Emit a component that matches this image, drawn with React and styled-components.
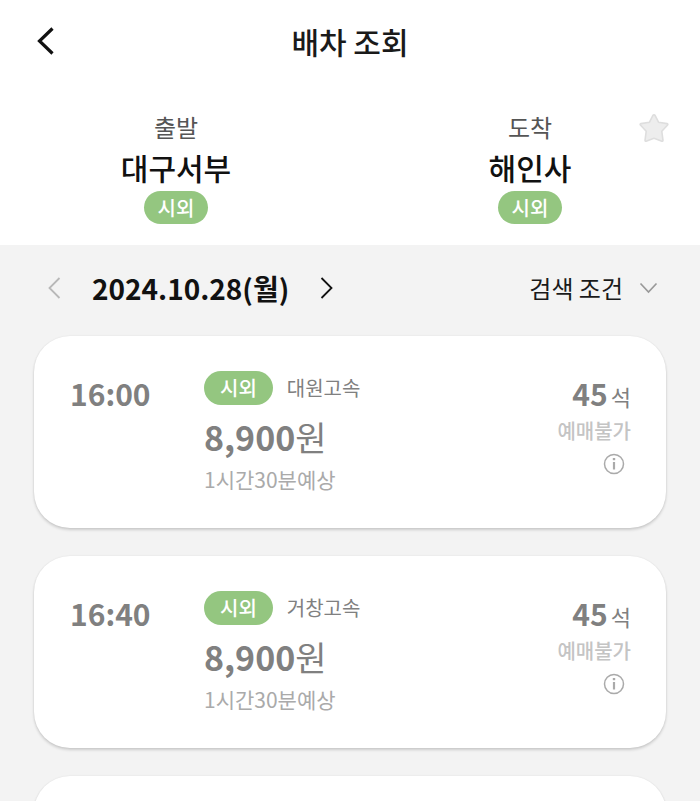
import styled, { createGlobalStyle } from 'styled-components';

const GlobalStyle = createGlobalStyle`
    * {
        box-sizing: border-box;
    }
    body {
        margin: 0;
        background: #f3f3f3;
        color: #1a1a1a;
        font-family: 'Noto Sans CJK KR', 'Noto Sans', sans-serif;
    }
    h1,
    h2,
    p,
    ul {
        margin: 0;
        padding: 0;
    }
    button {
        display: flex;
        align-items: center;
        padding: 0;
        border: 0;
        background: none;
        color: inherit;
        font: inherit;
        cursor: pointer;
    }
    svg {
        display: block;
    }
`;

const Screen = styled.div`
    display: flex;
    flex-direction: column;
    height: 100vh;
    overflow: hidden;
`;

const Header = styled.header`
    display: grid;
    grid-template-columns: 1fr auto 1fr;
    align-items: center;
    flex: none;
    height: 81px;
    padding: 0 36px;
    background: #fff;
`;

const Title = styled.h1`
    font-size: 30px;
    font-weight: 500;
    line-height: 40px;
`;

const Route = styled.section`
    display: grid;
    grid-template-columns: 1fr 1fr;
    column-gap: 14px;
    flex: none;
    padding: 30px 0 21px 6px;
    background: #fff;
`;

const Terminal = styled.div`
    display: flex;
    flex-direction: column;
    align-items: center;
    grid-row: 1;
    grid-column: ${({ $column }) => $column};
`;

const TerminalLabel = styled.p`
    color: #555;
    font-size: 24px;
    line-height: 32px;
`;

const TerminalName = styled.h2`
    color: #111;
    font-size: 30px;
    font-weight: 500;
    line-height: 48px;
`;

const Badge = styled.span`
    height: ${({ $large }) => ($large ? 34 : 33)}px;
    padding: 0 ${({ $large }) => ($large ? 16 : 14)}px;
    border-radius: 17px;
    background: #94c680;
    color: #fff;
    font-size: 20px;
    font-weight: 500;
    line-height: 33px;
`;

const FavoriteButton = styled.button`
    grid-row: 1;
    grid-column: 2;
    justify-self: end;
    align-self: start;
    margin: 1px 30px 0 0;
`;

const Toolbar = styled.div`
    display: flex;
    align-items: center;
    justify-content: space-between;
    flex: none;
    height: 85px;
    padding: 0 42px 0 48px;
`;

const DateNav = styled.div`
    display: flex;
    align-items: center;
    gap: 31px;
`;

const CurrentDate = styled.time`
    color: #111;
    font-size: 28px;
    font-weight: 700;
    line-height: 40px;
`;

const FilterButton = styled.button`
    gap: 16px;
    font-size: 24px;
    line-height: 40px;
`;

const List = styled.ul`
    flex: 1;
    display: flex;
    flex-direction: column;
    gap: 28px;
    padding: 6px 34px 28px;
    list-style: none;
    overflow-y: auto;
    scrollbar-width: none;
`;

const Card = styled.li`
    display: grid;
    grid-template-columns: 134px 1fr auto;
    flex: none;
    min-height: 192px;
    padding: 35px 35px 0 36px;
    border-radius: 36px;
    background: #fff;
    box-shadow: 0 2px 3px rgba(0, 0, 0, 0.16), 0 0 2px rgba(0, 0, 0, 0.08);
`;

const DepartTime = styled.time`
    padding-top: 2px;
    color: #808080;
    font-size: 30px;
    font-weight: 700;
    line-height: 40px;
`;

const Company = styled.div`
    display: flex;
    align-items: center;
    gap: 14px;
    color: #808080;
    font-size: 20px;
    line-height: 34px;
`;

const Price = styled.p`
    height: 58px;
    color: #808080;
    font-size: 34px;
    line-height: 64px;

    strong {
        font-weight: 700;
    }
`;

const Duration = styled.p`
    color: #aaa;
    font-size: 21px;
    line-height: 32px;
`;

const Seats = styled.div`
    display: flex;
    flex-direction: column;
    align-items: flex-end;
    padding-top: 2px;
`;

const SeatCount = styled.p`
    display: flex;
    align-items: baseline;
    gap: 3px;
    height: 40px;
    color: #808080;
    font-size: 22px;
    line-height: 40px;

    strong {
        font-size: 30px;
        font-weight: 700;
    }
`;

const Status = styled.p`
    color: #c4c4c4;
    font-size: 20px;
    font-weight: 500;
    line-height: 36px;
`;

const InfoButton = styled.button`
    margin: 4px 6px 0 0;
`;

const buses = [
    { time: '16:00', company: '대원고속' },
    { time: '16:40', company: '거창고속' },
];

function BackIcon() {
    return (
        <svg width="20" height="30" viewBox="0 0 20 30" fill="none" stroke="#111" strokeWidth="3.2">
            <path d="M16.5 2.5 3.5 15l13 12.5" />
        </svg>
    );
}

function ChevronIcon({ next }) {
    return (
        <svg width="13" height="24" viewBox="0 0 13 24" fill="none" stroke={next ? '#111' : '#b8b8b8'} strokeWidth="1.8">
            <path d={next ? 'M1.5 2 11.5 12l-10 10' : 'M11.5 2 1.5 12l10 10'} />
        </svg>
    );
}

function DownIcon() {
    return (
        <svg width="19" height="12" viewBox="0 0 19 12" fill="none" stroke="#999" strokeWidth="1.7">
            <path d="m1.5 1.5 8 8.5 8-8.5" />
        </svg>
    );
}

function StarIcon() {
    return (
        <svg width="32" height="32" viewBox="0 0 32 32" fill="#ededed" stroke="#dedede" strokeWidth="1.6" strokeLinejoin="round">
            <path d="M16 2.8q.8 0 1.2.8l3.3 6.6 8.6 1.4q1.2.4.5 1.4l-5.8 6.3 1.2 9q0 1.2-1.1.9L16 26.3l-7.9 2.9q-1.1.3-1.1-.9l1.2-9L2.4 13q-.7-1 .5-1.4l8.6-1.4 3.3-6.6q.4-.8 1.2-.8Z" />
        </svg>
    );
}

function InfoIcon() {
    return (
        <svg width="22" height="22" viewBox="0 0 22 22" fill="none" stroke="#aaa">
            <circle cx="11" cy="11" r="9.5" strokeWidth="1.5" />
            <path d="M11 9v7.5" strokeWidth="2.2" />
            <path d="M11 5v2.2" strokeWidth="2.4" />
        </svg>
    );
}

function BusCard({ bus }) {
    return (
        <Card>
            <DepartTime>{bus.time}</DepartTime>
            <div>
                <Company>
                    <Badge $large>시외</Badge>
                    <span>{bus.company}</span>
                </Company>
                <Price>
                    <strong>8,900</strong>원
                </Price>
                <Duration>1시간30분예상</Duration>
            </div>
            <Seats>
                <SeatCount>
                    <strong>45</strong>석
                </SeatCount>
                <Status>예매불가</Status>
                <InfoButton aria-label="예매불가 안내">
                    <InfoIcon />
                </InfoButton>
            </Seats>
        </Card>
    );
}

function App() {
    return (
        <Screen>
            <GlobalStyle />
            {/* Header */}
            <Header>
                <button aria-label="뒤로">
                    <BackIcon />
                </button>
                <Title>배차 조회</Title>
            </Header>
            {/* Route */}
            <Route>
                <Terminal $column={1}>
                    <TerminalLabel>출발</TerminalLabel>
                    <TerminalName>대구서부</TerminalName>
                    <Badge>시외</Badge>
                </Terminal>
                <Terminal $column={2}>
                    <TerminalLabel>도착</TerminalLabel>
                    <TerminalName>해인사</TerminalName>
                    <Badge>시외</Badge>
                </Terminal>
                <FavoriteButton aria-label="즐겨찾기">
                    <StarIcon />
                </FavoriteButton>
            </Route>
            {/* Date and filter */}
            <Toolbar>
                <DateNav>
                    <button aria-label="이전 날짜" disabled>
                        <ChevronIcon />
                    </button>
                    <CurrentDate dateTime="2024-10-28">2024.10.28(월)</CurrentDate>
                    <button aria-label="다음 날짜">
                        <ChevronIcon next />
                    </button>
                </DateNav>
                <FilterButton aria-expanded="false">
                    검색 조건
                    <DownIcon />
                </FilterButton>
            </Toolbar>
            {/* Buses */}
            <List>
                {buses.map((bus) => (
                    <BusCard key={bus.time} bus={bus} />
                ))}
                <Card aria-hidden="true" />
            </List>
        </Screen>
    );
}

export default App;
